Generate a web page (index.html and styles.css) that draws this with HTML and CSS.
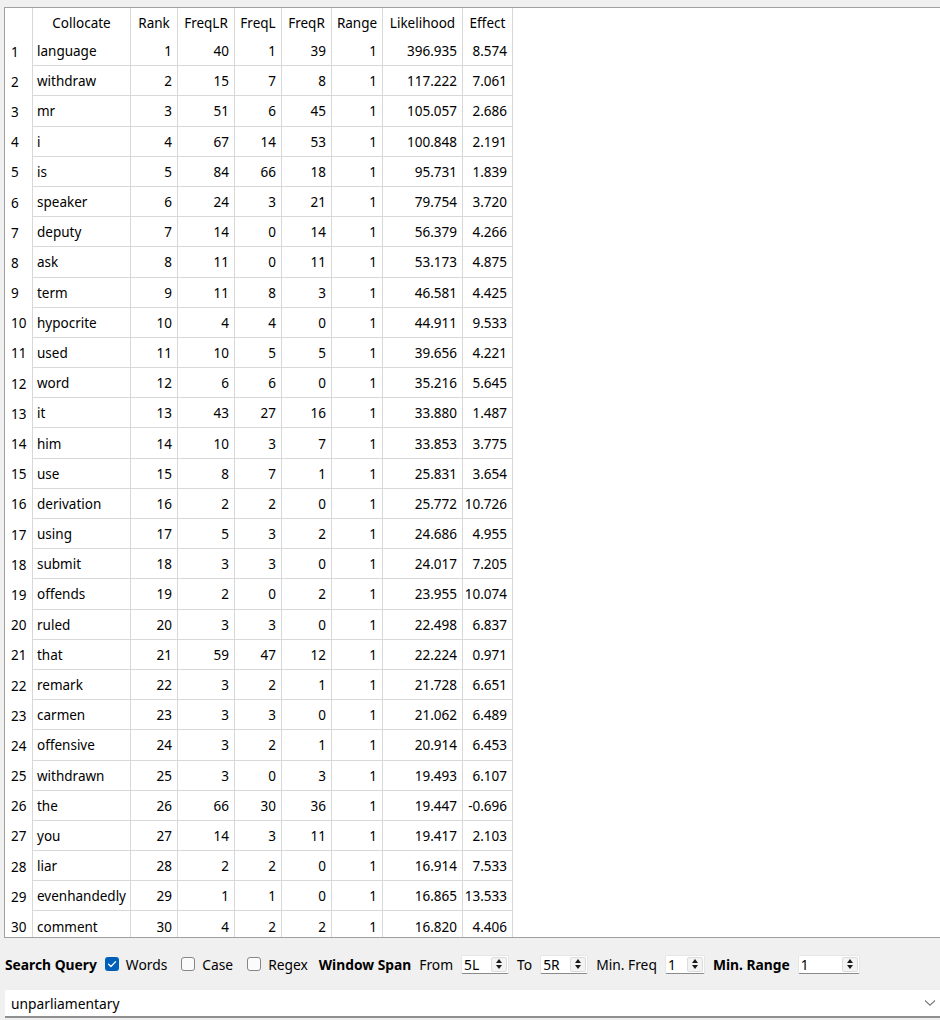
FILE: index.html
```html
<!DOCTYPE html>
<html>
<head>
<meta charset="utf-8">
<link rel="stylesheet" href="styles.css">
</head>
<body>
<div class="app">
  <div class="topstrip"></div>
  <div class="view">
    <div class="grid">
      <div class="hc"></div><div class="hc">Collocate</div><div class="hc">Rank</div><div class="hc">FreqLR</div><div class="hc">FreqL</div><div class="hc">FreqR</div><div class="hc">Range</div><div class="hc">Likelihood</div><div class="hc">Effect</div>
      <div class="rn">1</div><div class="w">language</div><div class="n">1</div><div class="n">40</div><div class="n">1</div><div class="n">39</div><div class="n">1</div><div class="n">396.935</div><div class="n">8.574</div>
      <div class="rn">2</div><div class="w">withdraw</div><div class="n">2</div><div class="n">15</div><div class="n">7</div><div class="n">8</div><div class="n">1</div><div class="n">117.222</div><div class="n">7.061</div>
      <div class="rn">3</div><div class="w">mr</div><div class="n">3</div><div class="n">51</div><div class="n">6</div><div class="n">45</div><div class="n">1</div><div class="n">105.057</div><div class="n">2.686</div>
      <div class="rn">4</div><div class="w">i</div><div class="n">4</div><div class="n">67</div><div class="n">14</div><div class="n">53</div><div class="n">1</div><div class="n">100.848</div><div class="n">2.191</div>
      <div class="rn">5</div><div class="w">is</div><div class="n">5</div><div class="n">84</div><div class="n">66</div><div class="n">18</div><div class="n">1</div><div class="n">95.731</div><div class="n">1.839</div>
      <div class="rn">6</div><div class="w">speaker</div><div class="n">6</div><div class="n">24</div><div class="n">3</div><div class="n">21</div><div class="n">1</div><div class="n">79.754</div><div class="n">3.720</div>
      <div class="rn">7</div><div class="w">deputy</div><div class="n">7</div><div class="n">14</div><div class="n">0</div><div class="n">14</div><div class="n">1</div><div class="n">56.379</div><div class="n">4.266</div>
      <div class="rn">8</div><div class="w">ask</div><div class="n">8</div><div class="n">11</div><div class="n">0</div><div class="n">11</div><div class="n">1</div><div class="n">53.173</div><div class="n">4.875</div>
      <div class="rn">9</div><div class="w">term</div><div class="n">9</div><div class="n">11</div><div class="n">8</div><div class="n">3</div><div class="n">1</div><div class="n">46.581</div><div class="n">4.425</div>
      <div class="rn">10</div><div class="w">hypocrite</div><div class="n">10</div><div class="n">4</div><div class="n">4</div><div class="n">0</div><div class="n">1</div><div class="n">44.911</div><div class="n">9.533</div>
      <div class="rn">11</div><div class="w">used</div><div class="n">11</div><div class="n">10</div><div class="n">5</div><div class="n">5</div><div class="n">1</div><div class="n">39.656</div><div class="n">4.221</div>
      <div class="rn">12</div><div class="w">word</div><div class="n">12</div><div class="n">6</div><div class="n">6</div><div class="n">0</div><div class="n">1</div><div class="n">35.216</div><div class="n">5.645</div>
      <div class="rn">13</div><div class="w">it</div><div class="n">13</div><div class="n">43</div><div class="n">27</div><div class="n">16</div><div class="n">1</div><div class="n">33.880</div><div class="n">1.487</div>
      <div class="rn">14</div><div class="w">him</div><div class="n">14</div><div class="n">10</div><div class="n">3</div><div class="n">7</div><div class="n">1</div><div class="n">33.853</div><div class="n">3.775</div>
      <div class="rn">15</div><div class="w">use</div><div class="n">15</div><div class="n">8</div><div class="n">7</div><div class="n">1</div><div class="n">1</div><div class="n">25.831</div><div class="n">3.654</div>
      <div class="rn">16</div><div class="w">derivation</div><div class="n">16</div><div class="n">2</div><div class="n">2</div><div class="n">0</div><div class="n">1</div><div class="n">25.772</div><div class="n">10.726</div>
      <div class="rn">17</div><div class="w">using</div><div class="n">17</div><div class="n">5</div><div class="n">3</div><div class="n">2</div><div class="n">1</div><div class="n">24.686</div><div class="n">4.955</div>
      <div class="rn">18</div><div class="w">submit</div><div class="n">18</div><div class="n">3</div><div class="n">3</div><div class="n">0</div><div class="n">1</div><div class="n">24.017</div><div class="n">7.205</div>
      <div class="rn">19</div><div class="w">offends</div><div class="n">19</div><div class="n">2</div><div class="n">0</div><div class="n">2</div><div class="n">1</div><div class="n">23.955</div><div class="n">10.074</div>
      <div class="rn">20</div><div class="w">ruled</div><div class="n">20</div><div class="n">3</div><div class="n">3</div><div class="n">0</div><div class="n">1</div><div class="n">22.498</div><div class="n">6.837</div>
      <div class="rn">21</div><div class="w">that</div><div class="n">21</div><div class="n">59</div><div class="n">47</div><div class="n">12</div><div class="n">1</div><div class="n">22.224</div><div class="n">0.971</div>
      <div class="rn">22</div><div class="w">remark</div><div class="n">22</div><div class="n">3</div><div class="n">2</div><div class="n">1</div><div class="n">1</div><div class="n">21.728</div><div class="n">6.651</div>
      <div class="rn">23</div><div class="w">carmen</div><div class="n">23</div><div class="n">3</div><div class="n">3</div><div class="n">0</div><div class="n">1</div><div class="n">21.062</div><div class="n">6.489</div>
      <div class="rn">24</div><div class="w">offensive</div><div class="n">24</div><div class="n">3</div><div class="n">2</div><div class="n">1</div><div class="n">1</div><div class="n">20.914</div><div class="n">6.453</div>
      <div class="rn">25</div><div class="w">withdrawn</div><div class="n">25</div><div class="n">3</div><div class="n">0</div><div class="n">3</div><div class="n">1</div><div class="n">19.493</div><div class="n">6.107</div>
      <div class="rn">26</div><div class="w">the</div><div class="n">26</div><div class="n">66</div><div class="n">30</div><div class="n">36</div><div class="n">1</div><div class="n">19.447</div><div class="n">-0.696</div>
      <div class="rn">27</div><div class="w">you</div><div class="n">27</div><div class="n">14</div><div class="n">3</div><div class="n">11</div><div class="n">1</div><div class="n">19.417</div><div class="n">2.103</div>
      <div class="rn">28</div><div class="w">liar</div><div class="n">28</div><div class="n">2</div><div class="n">2</div><div class="n">0</div><div class="n">1</div><div class="n">16.914</div><div class="n">7.533</div>
      <div class="rn">29</div><div class="w">evenhandedly</div><div class="n">29</div><div class="n">1</div><div class="n">1</div><div class="n">0</div><div class="n">1</div><div class="n">16.865</div><div class="n">13.533</div>
      <div class="rn">30</div><div class="w">comment</div><div class="n">30</div><div class="n">4</div><div class="n">2</div><div class="n">2</div><div class="n">1</div><div class="n">16.820</div><div class="n">4.406</div>
    </div>
  </div>
  <div class="toolbar">
    <span class="bold">Search Query</span>
    <label class="check"><span class="box on"><svg viewBox="0 0 14 14" width="14" height="14"><path d="M3.6 7.2 L6 9.5 L10.6 4.6" fill="none" stroke="#fff" stroke-width="1.3" stroke-linecap="round" stroke-linejoin="round"/></svg></span>Words</label>
    <label class="check"><span class="box"></span>Case</label>
    <label class="check last"><span class="box"></span>Regex</label>
    <span class="bold">Window Span</span>
    <span class="lbl">From</span>
    <span class="spin s-span"><span class="val">5L</span><span class="arrows"><span class="up"></span><span class="dn"></span></span></span>
    <span class="lbl">To</span>
    <span class="spin s-span"><span class="val">5R</span><span class="arrows"><span class="up"></span><span class="dn"></span></span></span>
    <span class="lbl">Min. Freq</span>
    <span class="spin s-freq"><span class="val">1</span><span class="arrows"><span class="up"></span><span class="dn"></span></span></span>
    <span class="bold">Min. Range</span>
    <span class="spin s-range"><span class="val">1</span><span class="arrows"><span class="up"></span><span class="dn"></span></span></span>
  </div>
  <div class="combo">
    <span>unparliamentary</span>
    <svg class="chev" viewBox="0 0 12 8" width="12" height="8"><path d="M1 1.5 L6 6.2 L11 1.5" fill="none" stroke="#7a7a7a" stroke-width="1.1"/></svg>
  </div>
</div>
</body>
</html>
```

FILE: styles.css
```css
html, body {
  margin: 0;
  padding: 0;
  background: #f0f0f0;
}
body {
  font-family: "Noto Sans", "Open Sans", sans-serif;
  font-size: 13.5px;
  color: #000;
  width: 940px;
  height: 1020px;
  overflow: hidden;
}
.app {
  display: flex;
  flex-direction: column;
}
.topstrip {
  height: 7px;
  background: #f0f0f0;
}
.view {
  margin-left: 4px;
  height: 929px;
  background: #fff;
  border-top: 1px solid #a0a0a0;
  border-left: 1px solid #a0a0a0;
  border-bottom: 1px solid #a0a0a0;
  overflow: hidden;
}
.grid {
  display: grid;
  grid-template-columns: 28px 98px 47px 57px 47px 50px 51px 80px 50px;
  grid-template-rows: 28px;
  grid-auto-rows: 30.2px;
  width: 508px;
}
.grid > div {
  box-sizing: border-box;
  border-right: 1px solid #d8d8d8;
  display: flex;
  align-items: center;
  white-space: nowrap;
  overflow: hidden;
  padding-top: 1px;
}
.hc {
  justify-content: center;
}
.rn {
  padding-left: 6px;
}
.w {
  padding-left: 4px;
  border-bottom: 1px solid #d8d8d8;
}
.n {
  justify-content: flex-end;
  padding-right: 5px;
  border-bottom: 1px solid #d8d8d8;
}
.toolbar {
  height: 52px;
  display: flex;
  align-items: center;
  padding-left: 5px;
  gap: 8px;
  font-size: 13.8px;
}
.bold {
  font-weight: bold;
}
.check {
  display: flex;
  align-items: center;
  gap: 7px;
  margin-right: 6px;
}
.check.last {
  margin-right: 3px;
}
.box {
  box-sizing: border-box;
  width: 14px;
  height: 14px;
  border: 1px solid #868686;
  border-radius: 3px;
  background: #fbfbfb;
  display: inline-block;
}
.box.on {
  border: none;
  background: #005fb8;
}
.box svg {
  display: block;
}
.spin {
  box-sizing: border-box;
  display: flex;
  align-items: center;
  height: 19px;
  background: #fff;
  border: 1px solid #e6e6e6;
  border-bottom: 1px solid #8a8a8a;
  border-radius: 2px;
  padding-left: 2px;
  padding-right: 1px;
}
.s-span { width: 48px; }
.s-freq { width: 40px; }
.s-range { width: 62px; }
.val {
  flex: 1;
}
.arrows {
  box-sizing: border-box;
  width: 16px;
  height: 15px;
  background: #f3f3f3;
  border: 1px solid #dcdcdc;
  border-radius: 2px;
  display: flex;
  flex-direction: column;
  align-items: center;
  justify-content: center;
  gap: 2px;
}
.up, .dn {
  width: 0;
  height: 0;
  border-left: 3.5px solid transparent;
  border-right: 3.5px solid transparent;
}
.up { border-bottom: 4px solid #1a1a1a; }
.dn { border-top: 4px solid #1a1a1a; }
.combo {
  margin-left: 5px;
  height: 26px;
  background: #fff;
  border-bottom: 2px solid #8f8f8f;
  display: flex;
  align-items: center;
  justify-content: space-between;
  padding-left: 6px;
  padding-right: 4px;
  font-size: 13.8px;
}
.chev {
  display: block;
}
```
